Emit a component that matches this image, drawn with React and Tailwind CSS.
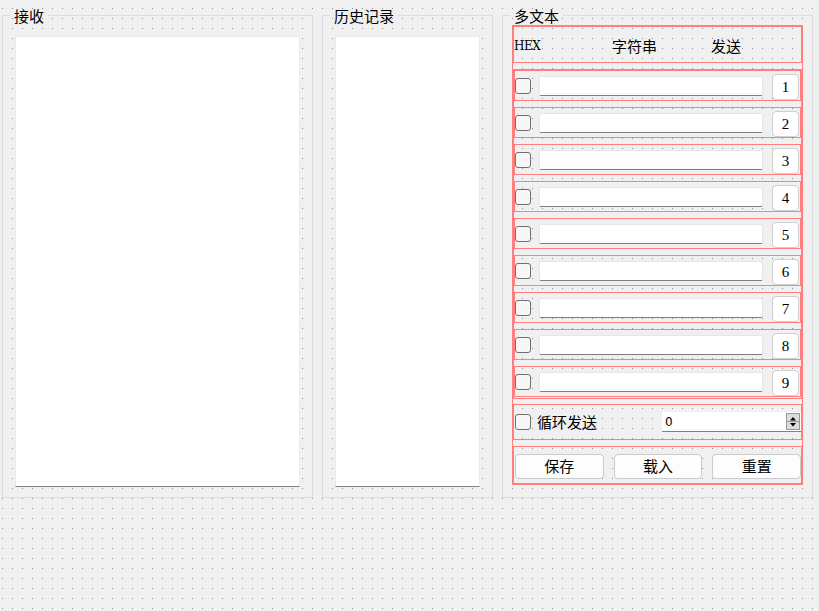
import React from "react";

const cjk = "font-['Noto_Sans_CJK_SC','Noto_Sans',sans-serif]";

function Checkbox() {
  return (
    <div className="h-[16px] w-[16px] shrink-0 rounded-[3px] border border-[#6f6f6f] bg-[#f7f7f7]" />
  );
}

function Group({ title, width, children }) {
  return (
    <fieldset
      className={`shrink-0 border border-[#dcdcdc] p-0 ${width}`}
    >
      <legend
        className={`ml-[7px] px-[4px] text-[15px] leading-[17px] text-black ${cjk}`}
      >
        {title}
      </legend>
      {children}
    </fieldset>
  );
}

function Row({ n }) {
  return (
    <div className="flex h-[31px] items-center border border-[#ff7f7f] pr-[1px]">
      <Checkbox />
      <div className="ml-[8px] h-[20px] flex-1 rounded-[2px] border border-[#e6e6e6] border-b-[#808080] bg-white" />
      <div className="ml-[9px] mt-[2px] flex h-[26px] w-[27px] shrink-0 items-center justify-center rounded-[4px] border border-[#cfcfcf] bg-white pt-[2px] font-['Liberation_Serif',serif] text-[15px] text-black">
        {n}
      </div>
    </div>
  );
}

export default function App() {
  const rows = [1, 2, 3, 4, 5, 6, 7, 8, 9];
  return (
    <div className="min-h-screen w-full bg-[#f0f0f0] bg-[radial-gradient(circle_at_2.5px_8.5px,#8f8f8f_0.8px,transparent_0.9px)] bg-size-[10px_10px]">
      <div className="flex items-start gap-[9px] pl-[2px] pt-[7px]">
        <Group title="接收" width="w-[311px]">
          <div className="px-[12px] pb-[10px] pt-[12px]">
            <div className="h-[451px] w-full border border-[#ebebeb] border-b-[#808080] bg-white" />
          </div>
        </Group>

        <Group title="历史记录" width="w-[171px]">
          <div className="px-[12px] pb-[10px] pt-[12px]">
            <div className="h-[451px] w-full border border-[#ebebeb] border-b-[#808080] bg-white" />
          </div>
        </Group>

        <Group title="多文本" width="w-[311px]">
          <div className="px-[9px] pb-[12px] pt-[1px]">
            <div className="flex h-[460px] flex-col border border-[#ff7f7f]">
              {/* header */}
              <div className="flex h-[37px] shrink-0 items-center border border-[#ff7f7f] pt-[3px] text-black">
                <div className="w-[98px] font-['DejaVu_Serif',serif] text-[12px] tracking-[-0.5px]">
                  HEX
                </div>
                <div className={`w-[99px] text-[15px] ${cjk}`}>字符串</div>
                <div className={`text-[15px] ${cjk}`}>发送</div>
              </div>

              {/* rows */}
              <div className="mt-[6px] flex h-[330px] shrink-0 flex-col gap-[6px] border border-[#ff7f7f] pb-[1px]">
                {rows.map((n) => (
                  <Row key={n} n={n} />
                ))}
              </div>

              {/* loop send */}
              <div className="mt-[5px] flex h-[36px] shrink-0 items-center border border-[#ff7f7f] pl-[1px]">
                <Checkbox />
                <div className={`ml-[6px] text-[15px] text-black ${cjk}`}>循环发送</div>
                <div className="ml-auto flex h-[20px] w-[139px] items-center border-b border-[#808080] bg-white">
                  <span className="pl-[3px] font-['DejaVu_Sans',sans-serif] text-[12px] leading-none text-black">
                    0
                  </span>
                  <div className="ml-auto mr-[1px] flex h-[17px] w-[14px] flex-col border border-[#9a9a9a] bg-[#dcdcdc]">
                    <svg width="12" height="15" viewBox="0 0 12 15">
                      <path d="M3 6.5 L6 3 L9 6.5 Z" fill="#000" />
                      <line x1="0" y1="7.5" x2="12" y2="7.5" stroke="#9a9a9a" strokeWidth="1" />
                      <path d="M3 9 L6 12.5 L9 9 Z" fill="#000" />
                    </svg>
                  </div>
                </div>
              </div>

              {/* buttons */}
              <div className="mt-[6px] flex h-[38px] shrink-0 gap-[10px] border border-[#ff7f7f] pl-[1px] pt-[7px]">
                {["保存", "载入", "重置"].map((t) => (
                  <div
                    key={t}
                    className={`flex h-[25px] flex-1 items-center justify-center rounded-[4px] border border-[#cbcbcb] bg-[#fdfdfd] text-[15px] text-black ${cjk}`}
                  >
                    {t}
                  </div>
                ))}
              </div>
            </div>
          </div>
        </Group>
      </div>
    </div>
  );
}
